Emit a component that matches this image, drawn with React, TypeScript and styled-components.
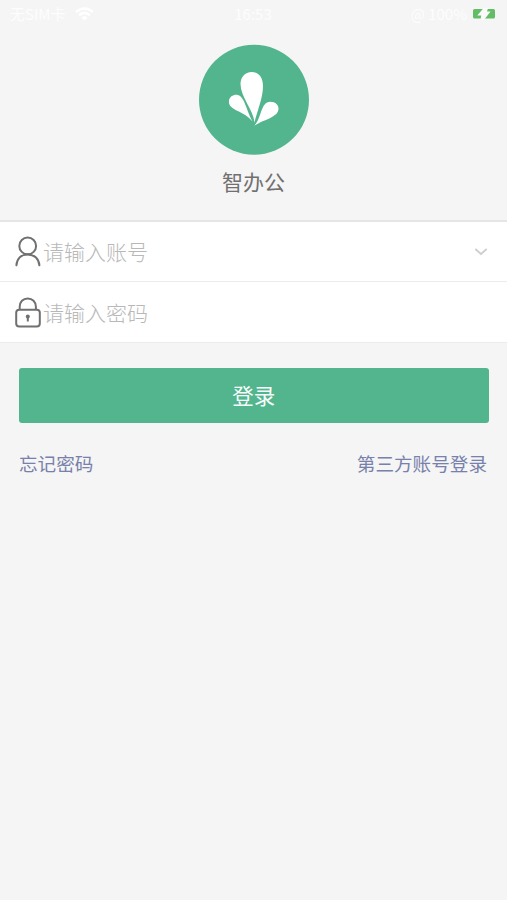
import React from "react";
import styled, { createGlobalStyle } from "styled-components";

const GlobalStyle = createGlobalStyle`
  * { box-sizing: border-box; }
  body {
    margin: 0;
    background: #f5f5f5;
    font-family: "Noto Sans CJK SC", "Noto Sans", sans-serif;
  }
  button, input { font: inherit; }
`;

const Screen = styled.main`
  display: flex;
  flex-direction: column;
  width: 100%;
  height: 900px;
  background: #f5f5f5;
  overflow: hidden;
`;

const StatusBar = styled.header`
  display: grid;
  grid-template-columns: 1fr auto 1fr;
  align-items: center;
  height: 28px;
  padding: 0 11px 0 10px;
  color: #fdfdfd;
  font-size: 15px;
  line-height: 28px;
`;

const StatusGroup = styled.div<{ $end?: boolean }>`
  display: flex;
  align-items: center;
  justify-content: ${(p) => (p.$end ? "flex-end" : "flex-start")};
  gap: ${(p) => (p.$end ? 5 : 9)}px;
`;

const Brand = styled.section`
  display: flex;
  flex-direction: column;
  align-items: center;
  height: 192px;
  padding-top: 16px;
`;

const Title = styled.h1`
  margin: 11px 0 0;
  color: #707070;
  font-size: 21px;
  font-weight: 400;
  line-height: 30px;
`;

const Fields = styled.div`
  border-top: 2px solid #e5e5e5;
  background: #fff;
`;

const Field = styled.label<{ $height: number }>`
  display: flex;
  align-items: center;
  height: ${(p) => p.$height}px;
  padding: 0 19px 0 14px;
  border-bottom: 1px solid #ececec;
`;

const Input = styled.input<{ $lift?: boolean }>`
  flex: 1;
  min-width: 0;
  height: 32px;
  margin-left: 1px;
  padding: 0 0 ${(p) => (p.$lift ? 2 : 0)}px;
  border: 0;
  outline: 0;
  background: transparent;
  color: #555;
  font-size: 21px;
  font-weight: 300;
  &::placeholder { color: #b8b8b8; opacity: 1; }
`;

const LoginButton = styled.button`
  height: 55px;
  margin: 25.4px 18.5px 0 19px;
  padding: 0 0 1px;
  border: 0;
  border-radius: 3px;
  background: #52b58e;
  color: #f8fdfb;
  font-size: 21.5px;
  line-height: 54px;
`;

const Links = styled.nav`
  display: flex;
  justify-content: space-between;
  padding: 26px 20px 0 19px;
`;

const TextLink = styled.a`
  color: #7881ab;
  font-size: 18.6px;
  line-height: 28px;
`;

const Wifi = () => (
  <svg width="19" height="14" viewBox="0 0 19 14" fill="none" stroke="#fff" strokeWidth="2.5">
    <path d="M1 5Q9.500-2 18 5M4 8.200Q9.500 3.500 15 8.200" />
    <path d="M6.500 10.500Q9.500 8 12.500 10.500L9.500 13.500Z" fill="#fff" stroke="none" />
  </svg>
);

const Battery = () => (
  <svg width="24" height="12" viewBox="0 0 24 12">
    <rect x="1" y="1" width="22" height="9.500" rx="1.500" fill="#62bd65" />
    <path d="M13.500 0L8.500 6H11L10 12L15.500 5H13L14.500 0Z" fill="#fafafa" stroke="#fafafa" strokeWidth="3" />
  </svg>
);

const Logo = () => (
  <svg width="112" height="111" viewBox="0 0 112 111">
    <circle cx="56" cy="55.700" r="55" fill="#52b58e" />
    <g fill="#fff">
      <path d="M56.500 78.500C55.500 66 42.500 53 42.500 40C42.500 33 47 28 53.700 28C60.500 28 65 33 65 42C65 54 59.500 66 56.500 78.500Z" />
      <path d="M54.600 77.500C48 70 43 69 36 65C32 62.500 30.500 60 31 56.500C31.500 53 34.500 50.700 38.500 50.700C46.500 51 48 66 54.600 77.500Z" />
      <path d="M55.500 82.500C64 75 62 57.700 72.500 57.700C77 57.700 80.500 60.500 80.500 64.500C80.500 68 78.500 70.500 74 73C68 76.500 62 77.500 55.500 82.500Z" />
    </g>
  </svg>
);

const UserIcon = () => (
  <svg width="28" height="32" viewBox="0 0 28 32" fill="none" stroke="#707070" strokeWidth="2" strokeLinecap="round">
    <circle cx="13.700" cy="9.900" r="8.400" />
    <path d="M2.400 29.300C3 22.500 7.300 18.400 13.700 18.400S24.800 22.500 25.400 29.300" />
  </svg>
);

const LockIcon = () => (
  <svg width="28" height="32" viewBox="0 0 28 32" fill="none" stroke="#707070" strokeWidth="2">
    <path d="M5.700 13.500V10.800C5.700 5.800 9 2.500 13.700 2.500S21.900 5.800 21.900 10.800V13.500" />
    <rect x="2.200" y="13.700" width="23.600" height="16.800" rx="3" />
    <circle cx="13.800" cy="20.500" r="2" fill="#707070" stroke="none" />
    <path d="M13.800 20.500V25.500" strokeWidth="2" />
  </svg>
);

const Chevron = () => (
  <svg width="14" height="10" viewBox="0 0 14 10" fill="none" stroke="#cecece" strokeWidth="1.800">
    <path d="M1.300 2L7 7L12.700 2" />
  </svg>
);

export default function App() {
  return (
    <>
      <GlobalStyle />
      <Screen>
        <StatusBar>
          <StatusGroup>无SIM卡 <Wifi /></StatusGroup>
          <span>16:53</span>
          <StatusGroup $end>
            <span>@ 100%</span>
            <Battery />
          </StatusGroup>
        </StatusBar>
        <Brand>
          <Logo />
          <Title>智办公</Title>
        </Brand>
        <Fields>
          <Field $height={60}>
            <UserIcon />
            <Input $lift placeholder="请输入账号" />
            <Chevron />
          </Field>
          <Field $height={61}>
            <LockIcon />
            <Input type="password" placeholder="请输入密码" />
          </Field>
        </Fields>
        <LoginButton>登录</LoginButton>
        <Links>
          <TextLink>忘记密码</TextLink>
          <TextLink>第三方账号登录</TextLink>
        </Links>
      </Screen>
    </>
  );
}
